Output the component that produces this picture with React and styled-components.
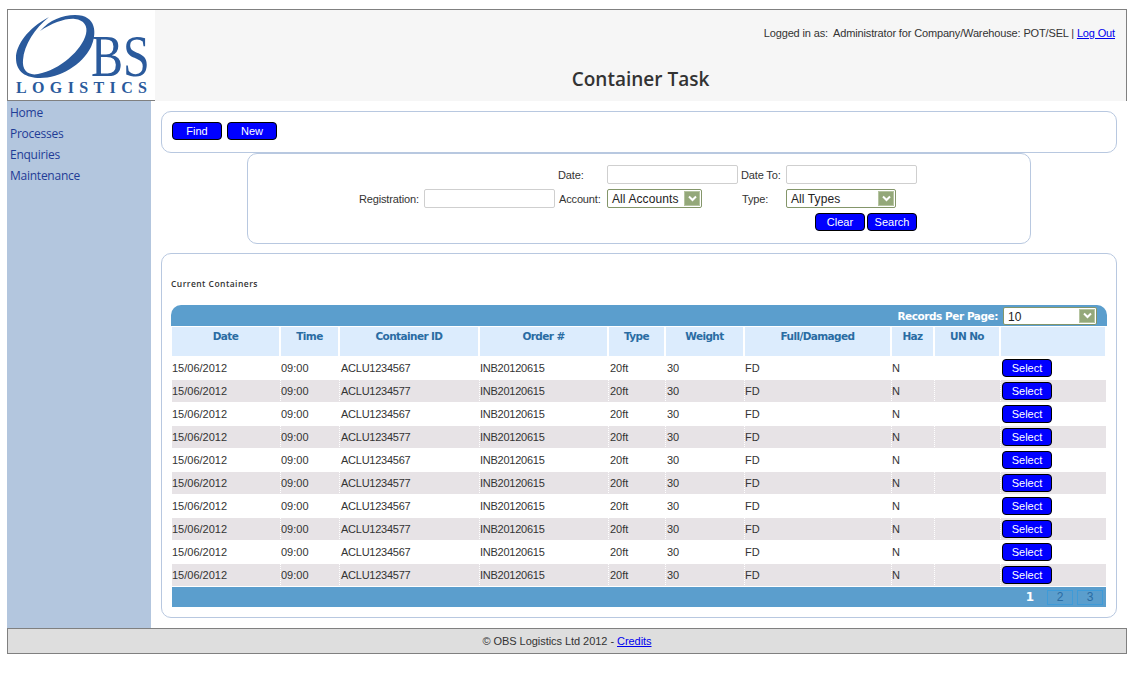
import React from 'react';
import styled, { createGlobalStyle } from 'styled-components';

const Global = createGlobalStyle`
  html, body { margin: 0; padding: 0; background: #fff; }
  body { font-family: "Liberation Sans", Arial, sans-serif; font-size: 11px; color: #333; }
  * { box-sizing: border-box; }
`;

const Shell = styled.div`
  width: 1120px;
  margin: 9px 0 21px 7px;
`;
const Header = styled.header`
  display: flex;
  height: 92px;
  border-top: 1px solid #808080;
  border-left: 1px solid #808080;
  border-right: 1px solid #808080;
  background: #f6f6f6;
`;
const LogoBox = styled.div`
  width: 147px;
  height: 91px;
  background: #fff;
  border-bottom: 1px solid #808080;
  flex: none;
`;
const HeaderMain = styled.div`
  flex: 1;
  display: flex;
  flex-direction: column;
  align-items: center;
`;
const UserLine = styled.div`
  align-self: flex-end;
  margin: 17px 11px 0 0;
  line-height: 13px;
  font-size: 11px;
  letter-spacing: -0.15px;
  color: #333;
  white-space: nowrap;
`;
const TextLink = styled.a`
  color: #0000ee;
  text-decoration: underline;
`;
const Title = styled.h1`
  margin: 27px 0 0;
  font-family: "Open Sans", sans-serif;
  font-size: 19px;
  line-height: 24px;
  font-weight: 600;
  color: #333;
`;
const Body = styled.div`
  display: flex;
  height: 527px;
`;
const Sidebar = styled.nav`
  width: 144px;
  flex: none;
  background: #b3c6de;
  padding: 1px 0 0 3px;
  display: flex;
  flex-direction: column;
`;
const NavItem = styled.a`
  display: block;
  height: 21px;
  line-height: 21px;
  font-family: "Open Sans", sans-serif;
  font-size: 12px;
  letter-spacing: -0.25px;
  color: #1f3c96;
`;
const Content = styled.main`
  flex: 1;
  padding: 10px 10px 0;
  display: flex;
  flex-direction: column;
  align-items: center;
`;
const Panel = styled.section`
  background: #fff;
  border: 1px solid #b8c8e0;
  border-radius: 10px;
`;
const ActionPanel = styled(Panel)`
  width: 956px;
  height: 42px;
  padding: 10px;
  display: flex;
  gap: 5px;
`;
const SearchPanel = styled(Panel)`
  width: 784px;
  height: 91px;
  padding: 11px 0 0 111px;
`;
const FormGrid = styled.div`
  display: grid;
  grid-template-columns: 65px 131px 52px 131px 48px 131px;
  grid-auto-rows: 19px;
  row-gap: 5px;
  align-items: center;
`;
const Label = styled.label`
  font-size: 11px;
  letter-spacing: -0.15px;
  padding-left: ${p => p.$indent || 0}px;
  color: #333;
  white-space: nowrap;
`;
const TextInput = styled.input`
  width: 131px;
  height: 19px;
  margin: 0;
  padding: 0;
  background: #fff;
  border: 1px solid #cfcfcf;
  border-radius: 2px;
`;
const SelectBox = styled.div`
  position: relative;
  width: ${p => p.$w}px;
  height: ${p => p.$h || 19}px;
  background: #fff;
  border: 1px solid #84966a;
  border-radius: 2px;
  padding: 1px 0 0 4px;
  line-height: ${p => (p.$h || 19) - 2}px;
  font-size: 12px;
  letter-spacing: 0.1px;
  color: #222;
`;
const SelectArrow = styled.span`
  position: absolute;
  top: 1px;
  right: 1px;
  bottom: 1px;
  width: 16px;
  background: #94a87a;
  border: 1px solid #b5c4a0;
  display: flex;
  align-items: center;
  justify-content: center;
`;
const Btn = styled.button`
  width: 50px;
  height: 18px;
  margin: 0;
  padding: 0;
  background: #0000ff;
  color: #fff;
  font-family: "Liberation Sans", Arial, sans-serif;
  font-size: 11px;
  line-height: 15px;
  border: 1px solid #000;
  border-radius: 4px;
`;
const FormButtons = styled.div`
  grid-column: 1 / -1;
  display: flex;
  justify-content: flex-end;
  gap: 2px;
  margin-top: -1px;
`;
const TablePanel = styled(Panel)`
  width: 956px;
  height: 365px;
  margin-top: 9px;
  padding: 22px 9px 0;
`;
const PanelTitle = styled.h2`
  margin: 0 0 14px;
  font-family: "Open Sans", sans-serif;
  font-size: 8.5px;
  line-height: 15px;
  font-weight: 600;
  letter-spacing: 0.45px;
  color: #333;
`;
const TableBar = styled.div`
  height: 21px;
  background: #5b9ecd;
  border-radius: 10px 10px 0 0;
  display: flex;
  align-items: center;
  justify-content: flex-end;
  padding-right: 10px;
  gap: 5px;
`;
const BarLabel = styled.span`
  font-family: "DejaVu Sans", sans-serif;
  font-size: 10.5px;
  font-weight: 700;
  letter-spacing: -0.45px;
  color: #fff;
`;
const Table = styled.table`
  table-layout: fixed;
  width: 934px;
  margin: 1px 0 0 1px;
  border-collapse: separate;
  border-spacing: 0;
`;
const Th = styled.th`
  height: 30px;
  padding: 2px 0 0;
  vertical-align: top;
  background: #dcecfd;
  background-clip: padding-box;
  border-left: ${p => (p.$first ? 0 : 1)}px solid #fff;
  border-right: 1px solid #fff;
  border-bottom: 1px solid #fff;
  font-family: "DejaVu Sans", sans-serif;
  font-size: 10.5px;
  line-height: 15px;
  font-weight: 700;
  letter-spacing: -0.6px;
  color: #2a6ca3;
  text-align: center;
`;
const Row = styled.tr`
  background: ${p => (p.$alt ? '#e7e3e6' : '#fff')};
`;
const Td = styled.td`
  height: 23px;
  padding: 0 0 0 ${p => p.$pad || 0}px;
  border-left: ${p => (p.$first ? 'none' : '1px dotted #fff')};
  border-bottom: 1px solid #fff;
  font-size: 11px;
  letter-spacing: ${p => (p.$tight ? '-0.25px' : '0')};
  color: #333;
  white-space: nowrap;
  vertical-align: middle;
`;
const SelectCell = styled(Td)`
  padding: 0 0 0 1px;
  line-height: 0;
`;
const Pager = styled.div`
  width: 934px;
  height: 20px;
  margin-left: 1px;
  background: #5b9ecd;
  display: flex;
  align-items: center;
  justify-content: flex-end;
  padding-right: 3px;
  gap: 4px;
`;
const PageNum = styled.span`
  width: 26px;
  height: 15px;
  line-height: 13px;
  text-align: center;
  font-size: 12px;
  font-family: ${p => (p.$active ? '"DejaVu Sans", sans-serif' : '"Liberation Sans", sans-serif')};
  font-weight: ${p => (p.$active ? 700 : 400)};
  color: ${p => (p.$active ? '#fff' : '#2a6ca3')};
  border: 1px solid ${p => (p.$active ? 'transparent' : '#3f9bd8')};
`;
const Footer = styled.footer`
  height: 26px;
  background: #dedede;
  border: 1px solid #808080;
  display: flex;
  align-items: center;
  justify-content: center;
  font-size: 11px;
  letter-spacing: -0.05px;
  color: #333;
`;
const Chevron = () => (
  <svg width="9" height="7" viewBox="0 0 9 7" aria-hidden="true">
    <path d="M1 1.5 L4.5 5 L8 1.5" fill="none" stroke="#fff" strokeWidth="2" />
  </svg>
);

const FakeSelect = ({ w, h, children }) => (
  <SelectBox $w={w} $h={h}>
    {children}
    <SelectArrow><Chevron /></SelectArrow>
  </SelectBox>
);

const Logo = () => (
  <svg width="147" height="90" viewBox="8 10 147 90" aria-label="OBS Logistics">
    <path
      fill="#2a5a9c"
      d="M49 17 C28 28 16 45 16 58 C16 72 26 78 40 78 C60 78 82 65 91 47 C97 34 97 15 75 15 C62 15 50 20 40 31 C52 23 66 18 75 19 C84 20 88 26 86 34 C82 50 60 70 38 74 C28 76 22 70 23 60 C24 45 35 28 49 17 Z"
    />
    <text transform="translate(91 76) scale(0.8 1)" fontFamily="Liberation Serif, serif" fontSize="60" fill="#2a5a9c">BS</text>
    <text x="16" y="93" fontFamily="Liberation Serif, serif" fontSize="16" fontWeight="700" fill="#2a5a9c" textLength="131">LOGISTICS</text>
  </svg>
);

const columns = [
  ['Date', 108], ['Time', 59], ['Container ID', 140], ['Order #', 129], ['Type', 57],
  ['Weight', 79], ['Full/Damaged', 147], ['Haz', 43], ['UN No', 66], ['', 106],
];
const rows = Array.from({ length: 10 }, (_, i) => i);

export default function App() {
  return (
    <>
      <Global />
      <Shell>
        <Header>
          <LogoBox><Logo /></LogoBox>
          <HeaderMain>
            <UserLine>
              Logged in as:&nbsp; Administrator for Company/Warehouse: POT/SEL | <TextLink href="#">Log Out</TextLink>
            </UserLine>
            <Title>Container Task</Title>
          </HeaderMain>
        </Header>
        <Body>
          <Sidebar>
            {['Home', 'Processes', 'Enquiries', 'Maintenance'].map(n => <NavItem key={n}>{n}</NavItem>)}
          </Sidebar>
          <Content>
            <ActionPanel>
              <Btn>Find</Btn>
              <Btn>New</Btn>
            </ActionPanel>
            <SearchPanel>
              <FormGrid>
                <span />
                <span />
                <Label $indent={3}>Date:</Label>
                <TextInput />
                <Label $indent={3}>Date To:</Label>
                <TextInput />
                <Label>Registration:</Label>
                <TextInput />
                <Label $indent={4}>Account:</Label>
                <FakeSelect w={95}>All Accounts</FakeSelect>
                <Label $indent={4}>Type:</Label>
                <FakeSelect w={110}>All Types</FakeSelect>
                <FormButtons>
                  <Btn>Clear</Btn>
                  <Btn>Search</Btn>
                </FormButtons>
              </FormGrid>
            </SearchPanel>
            <TablePanel>
              <PanelTitle>Current Containers</PanelTitle>
              <TableBar>
                <BarLabel>Records Per Page:</BarLabel>
                <FakeSelect w={94} h={18}>10</FakeSelect>
              </TableBar>
              <Table>
                <colgroup>
                  {columns.map(([n, w], i) => <col key={i} width={w} />)}
                </colgroup>
                <thead>
                  <tr>
                    {columns.map(([n], i) => <Th key={i} $first={i === 0}>{n}</Th>)}
                  </tr>
                </thead>
                <tbody>
                  {rows.map(i => (
                    <Row key={i} $alt={i % 2 === 1}>
                      <Td $first>15/06/2012</Td>
                      <Td>09:00</Td>
                      <Td $tight $pad={1}>{i % 2 === 1 ? 'ACLU1234577' : 'ACLU1234567'}</Td>
                      <Td $tight>INB20120615</Td>
                      <Td $pad={1}>20ft</Td>
                      <Td $pad={1}>30</Td>
                      <Td>FD</Td>
                      <Td>N</Td>
                      <Td />
                      <SelectCell><Btn>Select</Btn></SelectCell>
                    </Row>
                  ))}
                </tbody>
              </Table>
              <Pager>
                <PageNum $active>1</PageNum>
                <PageNum>2</PageNum>
                <PageNum>3</PageNum>
              </Pager>
            </TablePanel>
          </Content>
        </Body>
        <Footer>
          © OBS Logistics Ltd 2012 -&nbsp;<TextLink href="#">Credits</TextLink>
        </Footer>
      </Shell>
    </>
  );
}
